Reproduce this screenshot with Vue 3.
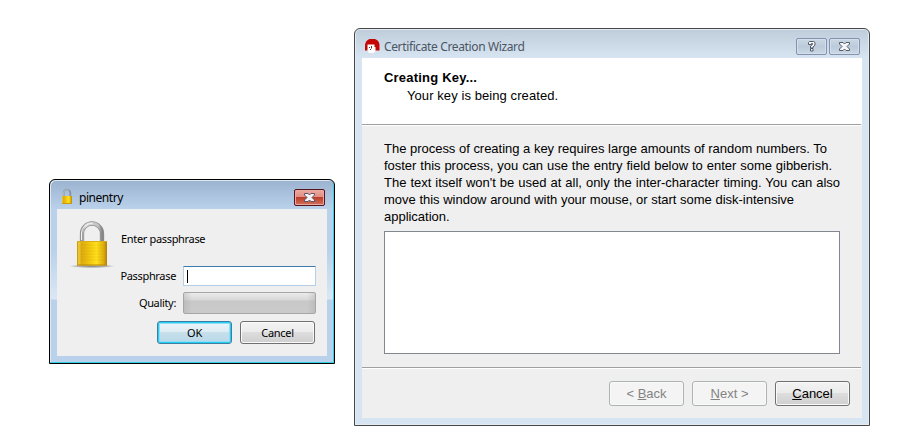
<script setup>
const paragraph = [
  { text: 'The process of creating a key requires large amounts of random numbers. To', width: 443 },
  { text: 'foster this process, you can use the entry field below to enter some gibberish.', width: 448 },
  { text: "The text itself won't be used at all, only the inter-character timing. You can also", width: 456 },
  { text: 'move this window around with your mouse, or start some disk-intensive', width: 410 },
  { text: 'application.', width: 65 },
]
</script>

<template>
  <main class="stage">
    <section class="window pin">
      <header class="bar">
        <svg class="mini-lock" width="12" height="17" viewBox="0 0 12 17">
          <path d="M2.7 8.5V5a3.3 3.3 0 0 1 6.6 0V8.5" fill="none" stroke="#87939b" stroke-width="1.8" />
          <path d="M2.7 8V5a3.3 3.3 0 0 1 5-2.8" fill="none" stroke="#cdd3d5" stroke-width=".7" />
          <rect x="1" y="8" width="10" height="8" fill="url(#gold)" />
          <path d="M1 15.5h10" stroke="#c99a17" />
        </svg>
        <span class="pin-title">pinentry</span>
        <button class="close">
          <svg width="29" height="15" viewBox="0 0 29 15">
            <path d="M9.5 3.5h3.5l1.5 1.5L16 3.5h3.5v1.5L17 7.5l2.5 2.5v1.5H16l-1.5-1.5L13 11.500H9.500V10L12 7.500 9.500 5z" fill="#f4f4f6" stroke="#5b5267" />
          </svg>
        </button>
      </header>
      <div class="pin-body">
        <svg class="lock" width="46" height="49" viewBox="0 0 46 49">
          <defs>
            <linearGradient id="gold">
              <stop offset="0" stop-color="#b98a08" />
              <stop offset=".06" stop-color="#f4cf35" />
              <stop offset=".15" stop-color="#dcaa11" />
              <stop offset=".4" stop-color="#f0c50f" />
              <stop offset=".65" stop-color="#ffe11c" />
              <stop offset=".9" stop-color="#daaa0c" />
              <stop offset="1" stop-color="#ad7f0a" />
            </linearGradient>
            <linearGradient id="steel">
              <stop offset="0" stop-color="#9a9a9a" />
              <stop offset=".2" stop-color="#dedede" />
              <stop offset=".8" stop-color="#c2c2c2" />
              <stop offset="1" stop-color="#858585" />
            </linearGradient>
            <radialGradient id="shade">
              <stop offset="0" stop-color="#888" />
              <stop offset=".65" stop-color="#b4b4b4" />
              <stop offset="1" stop-color="#efefef" />
            </radialGradient>
          </defs>
          <ellipse cx="23" cy="45.2" rx="23" ry="1.8" fill="url(#shade)" />
          <path d="M13 22V12.500a10 10 0 0 1 20 0V22" fill="none" stroke="#8d8d8d" stroke-width="4.300" />
          <path d="M13 22V12.500a10 10 0 0 1 20 0V22" fill="none" stroke="url(#steel)" stroke-width="3" />
          <path d="M12.500 19v-7a10.500 10 0 0 1 11-9.700" fill="none" stroke="#f1f1f1" stroke-width="1" />
          <rect x="8" y="20" width="30" height="24.5" rx=".6" fill="url(#gold)" />
          <path d="M8.5 20.5h29" stroke="#d9ae1d" />
          <path d="M10 24h27M10 27h27M10 30h27M10 33h27M10 36h27M10 39h27" stroke="#c28f00" stroke-opacity=".16" />
          <path d="M8.5 44h29" stroke="#b88807" />
        </svg>
        <p class="prompt"><span class="t enter">Enter passphrase</span></p>
        <label class="t passlabel">Passphrase</label>
        <div class="input"><i></i></div>
        <label class="t quality">Quality:</label>
        <div class="meter"></div>
        <div class="pin-actions">
          <button class="btn small ok"><span>OK</span></button>
          <button class="btn small"><span>Cancel</span></button>
        </div>
      </div>
    </section>

    <section class="window wizard">
      <header class="bar">
        <svg class="face" width="15" height="15" viewBox="0 0 15 15">
          <path d="M4.500 0h5.500q4.300 1.500 4.500 6v5.500H10V13H3v-1.500H0V6Q.5 1.500 4.500 0z" fill="#c40606" />
          <path d="M2.500 5.500h7V8h1v4L9 14H4l-1.500-2z" fill="#fff" />
          <path d="M6 7h1v2.500H6zM4 8h1v1H4zM5 10h1v1H5z" fill="#4a3b3e" />
        </svg>
        <span class="wiz-title">Certificate Creation Wizard</span>
        <button class="tool">
          <svg width="29" height="15" viewBox="0 0 29 15">
            <path d="M11.5 5.5v-2l1-1h4l1.5 1v2.5l-2 2v1h-2.5V7l2-1.5V4.500h-1v1zM13.500 9.500H16v2.500h-2.500z" fill="#f5f6f8" stroke="#555a69" />
          </svg>
        </button>
        <button class="tool">
          <svg width="29" height="15" viewBox="0 0 29 15">
            <path d="M9.5 3.5h3.5l1.5 1.5L16 3.5h3.5v1.5L17 7.5l2.5 2.5v1.5H16l-1.5-1.5L13 11.500H9.500V10L12 7.500 9.500 5z" fill="#f5f6f8" stroke="#555a69" />
          </svg>
        </button>
      </header>
      <div class="wiz-body">
        <div class="heading">
          <h1><span>Creating Key...</span></h1>
          <p><span>Your key is being created.</span></p>
        </div>
        <div class="rule"></div>
        <div class="content">
          <p v-for="line in paragraph" :key="line.text" class="line" :style="{ width: line.width + 'px' }">{{ line.text }}</p>
          <div class="area"></div>
        </div>
        <div class="rule"></div>
        <footer>
          <button class="btn large off"><span>&lt; <u>B</u>ack</span></button>
          <button class="btn large off"><span><u>N</u>ext &gt;</span></button>
          <button class="btn large"><span><u>C</u>ancel</span></button>
        </footer>
      </div>
    </section>
  </main>
</template>

<style>
body { margin: 0; background: #fff; }
</style>

<style scoped>
* { box-sizing: border-box; }
h1, p { margin: 0; }
button { margin: 0; padding: 0; }
.stage {
  width: 903px; height: 435px; overflow: hidden;
  display: flex; align-items: flex-start; gap: 19px; padding-left: 49px;
  background: #fff; color: #000;
  font-family: "Liberation Sans", Arial, sans-serif;
}
.window { flex: none; padding: 0 7px 7px; border: 1px solid #000; border-radius: 6px 6px 0 0; }
.bar { display: flex; align-items: flex-start; }
.pin {
  width: 286px; height: 185px; margin-top: 179px;
  background: linear-gradient(#9bb3cf 0, #b9d1ea 29px, #b9d1ea 70px, #dbe7f5 119px, #b9d1ea 120px);
  box-shadow: inset -1px -1px #35cfe8, inset 1px 1px #dce8f3;
}
.pin .bar { height: 29px; padding: 9px 2px 0 4px; }
.mini-lock { margin-top: -1px; }
.pin-title { flex: 1; margin-left: 6px; font: 12px/18px "Noto Sans", sans-serif; letter-spacing: -.45px; }
.close {
  width: 31px; height: 17px; border: 1px solid #54151f; border-radius: 2px;
  background: linear-gradient(#eeaaa1 0, #df8e82 47%, #bd3d28 50%, #d0725d 100%);
  box-shadow: inset 0 0 0 1px #eba89f;
}
.close svg, .tool svg { display: block; }
.pin-body {
  height: 147px; background: #efefef;
  display: grid; grid-template: 57px 20px 6px 22px 7px 23px / 119px 7px 133px;
  align-items: center;
}
.lock { grid-area: 1 / 1; align-self: start; margin: 12px 0 0 12px; }
.prompt { grid-area: 1 / 1 / 2 / 4; padding-left: 64px; padding-top: 1px; line-height: 18px; }
.t { font: 11px/18px "Noto Sans", sans-serif; white-space: nowrap; letter-spacing: -.33px; }
.passlabel { grid-area: 2 / 1; justify-self: end; }
.quality { grid-area: 4 / 1; justify-self: end; }
.input { grid-area: 2 / 3; height: 20px; padding: 3px; background: #fff; border: 1px solid #b5cfe7; border-top-color: #3d7bad; border-radius: 1px; }
.input i { display: block; width: 1px; height: 13px; background: #000; }
.meter {
  grid-area: 4 / 3; height: 22px; border: 1px solid #a6a6a6; border-radius: 2px;
  background: linear-gradient(90deg, #aaa6, transparent 8px, transparent 123px, #aaa6), linear-gradient(#ececec, #d7d7d7 7px, #c8c8c8 8px, #cbcbcb);
}
.pin-actions { grid-area: 6 / 1 / 7 / 4; display: flex; justify-content: flex-end; gap: 8px; padding-right: 1px; }
.btn {
  width: 75px; border: 1px solid #707070; border-radius: 3px; text-align: center; color: #000;
  background: linear-gradient(#f3f3f3, #ebebeb 49%, #ddd 50%, #cfcfcf);
  box-shadow: inset 0 0 0 1px #fafafa;
}
.small { height: 23px; font: 11px/20px "Noto Sans", sans-serif; letter-spacing: -.3px; }
.ok {
  border-color: #3e7e9e; background: linear-gradient(#edf5f9, #dcebf3 49%, #c6dfeb 50%, #b9d8e7);
  box-shadow: inset 0 0 0 1px #27ccf5, inset 0 0 0 2px #8edff5;
}
.wizard {
  width: 516px; height: 398px; margin-top: 28px; border-color: #474747;
  background: linear-gradient(#bfcddb, #d7e4f2 29px, #d7e4f2);
  box-shadow: inset 0 0 0 1px #e3ebf3;
}
.wizard .bar { height: 29px; padding: 9px 2px 0 3px; }
.face { margin-top: 1px; }
.wiz-title { flex: 1; margin-left: 4px; color: #4b5663; font: 12px/18px "Noto Sans", sans-serif; white-space: nowrap; letter-spacing: -.37px; }
.tool {
  width: 31px; height: 17px; border: 1px solid #8292b0; border-radius: 2px;
  background: linear-gradient(#cbd7e3, #bccbdb 50%, #c9d7e6); box-shadow: inset 0 0 0 1px #d4dfea;
}
.tool + .tool { margin-left: 2px; }
.wiz-body { height: 360px; background: #efefef; }
.heading { height: 66px; padding: 11px 22px; background: #fff; font-size: 13px; line-height: 18px; }
h1 { font-size: 13px; line-height: 18px; letter-spacing: .2px; }
.heading p { padding-left: 23px; letter-spacing: .08px; }
.rule { height: 2px; width: 499px; border-top: 1px solid #a0a0a0; border-bottom: 1px solid #fff; }
.content { height: 241px; padding: 14px 22px 0; }
.line { font-size: 13px; line-height: 17px; text-align-last: justify; white-space: nowrap; letter-spacing: -.02px; }
.area { width: 456px; height: 123px; margin-top: 6px; border: 1px solid #828790; background: #fff; }
footer { display: flex; justify-content: flex-end; gap: 8px; padding: 12px 12px 0 0; }
.large { height: 25px; font: 13px/23px "Liberation Sans", Arial, sans-serif; }
.off { color: #838383; border-color: #adb2b5; background: #f4f4f4; }
u { text-decoration: underline 1px; text-underline-offset: 1px; }
</style>
